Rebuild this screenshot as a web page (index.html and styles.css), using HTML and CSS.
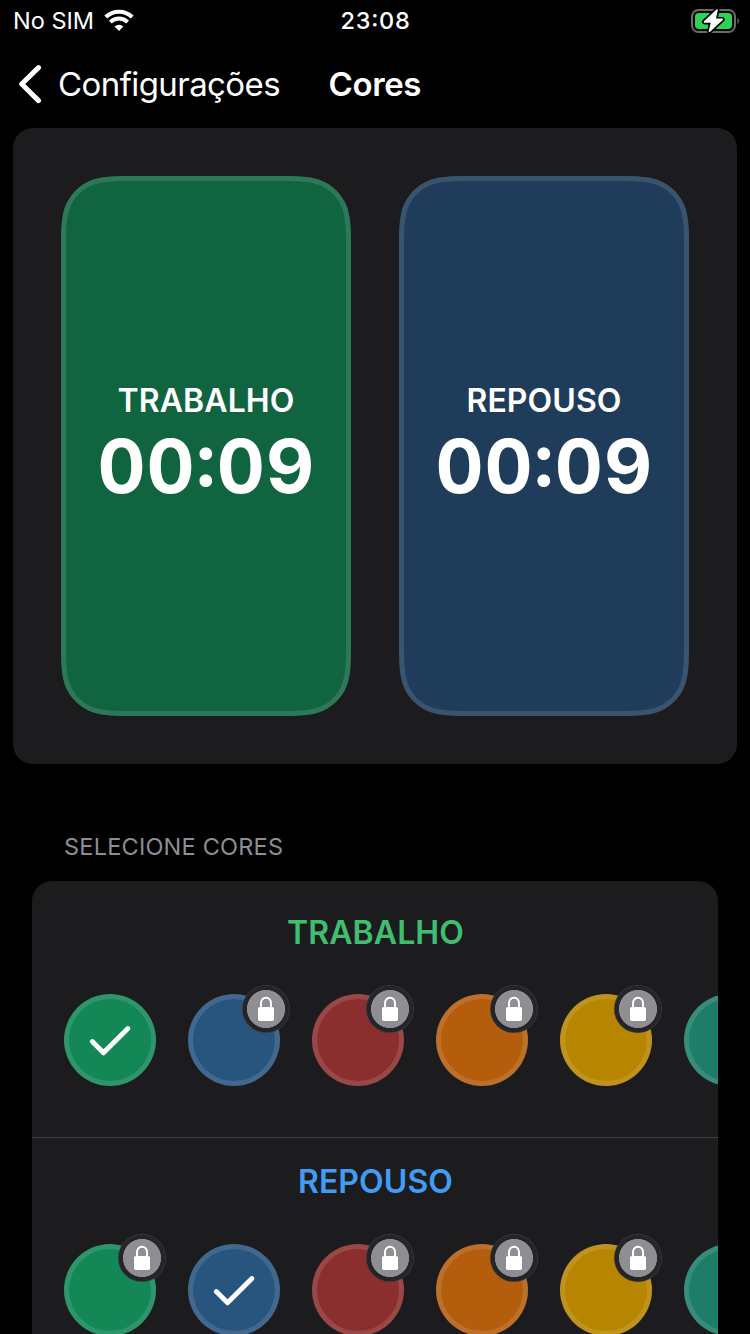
FILE: index.html
```html
<!DOCTYPE html>
<html lang="pt">
<head>
<meta charset="utf-8">
<title>Cores</title>
<link rel="stylesheet" href="styles.css">
</head>
<body>
<svg class="defs" width="0" height="0" aria-hidden="true">
  <defs>
    <path id="squircle" d="M76.4 0H213.6C235.58 0 246.58 0 258.43 3.75C271.36 8.45 281.55 18.64 286.25 31.57C290 43.42 290 54.42 290 76.4V463.6C290 485.58 290 496.58 286.25 508.43C281.55 521.36 271.36 531.55 258.43 536.25C246.58 540 235.58 540 213.6 540H76.4C54.42 540 43.42 540 31.57 536.25C18.64 531.55 8.45 521.36 3.75 508.43C0 496.58 0 485.58 0 463.6V76.4C0 54.42 0 43.42 3.75 31.57C8.45 18.64 18.64 8.45 31.57 3.75C43.42 0 54.42 0 76.4 0Z"/>
    <clipPath id="squircle-clip"><use href="#squircle"/></clipPath>
    <symbol id="lock" viewBox="0 0 48 48">
      <path d="M19 23V18.5C19 15.2 21 12.8 24 12.8S29 15.2 29 18.5V23" fill="none" stroke="#fff" stroke-width="2"/>
      <rect x="16" y="22" width="16" height="14" rx="1.8" fill="#fff"/>
    </symbol>
    <symbol id="check" viewBox="0 0 92 92">
      <path d="M28.3 47.6L39.5 58.8L63.9 34.6" fill="none" stroke="#fff" stroke-width="4.9" stroke-linecap="round" stroke-linejoin="round"/>
    </symbol>
  </defs>
</svg>
<div class="screen">
  <header class="status">
    <div class="carrier"><span class="carrier-name">No SIM</span>
      <svg class="wifi" width="30" height="23" viewBox="0 0 30 23">
        <g fill="none" stroke="#fff"><path d="M1.8 8.1A19 19 0 0 1 28.2 8.1" stroke-width="4.2"/><path d="M6.4 13.1A12.3 12.3 0 0 1 23.6 13.1" stroke-width="4"/></g>
        <path d="M15 22L10.6 17.6A6.3 6.3 0 0 1 19.4 17.6Z" fill="#fff"/>
      </svg>
    </div>
    <span class="clock">23:08</span>
    <svg class="battery" width="48" height="26" viewBox="0 0 48 26">
      <rect x="1" y="2" width="43" height="22" rx="6.5" fill="none" stroke="#6b6b6b" stroke-width="2"/>
      <path d="M46.5 9.5Q49.5 13 46.5 16.5Z" fill="#6b6b6b"/>
      <rect x="4" y="5" width="37" height="16" rx="4" fill="#30d158"/>
      <path d="M26 2L13.5 13.9H20.8L18.5 23.2L31.2 11.4H24Z" fill="#fff" stroke="#000" stroke-width="5" stroke-linejoin="round"/>
      <path d="M26 2L13.5 13.9H20.8L18.5 23.2L31.2 11.4H24Z" fill="#fff" stroke="#fff" stroke-width="1.6" stroke-linejoin="round"/>
    </svg>
  </header>
  <nav class="nav">
    <svg class="back" width="24" height="40" viewBox="0 0 24 40"><path d="M20.5 3.6L3.7 20L20.5 36.6" fill="none" stroke="#fff" stroke-width="5" stroke-linecap="round" stroke-linejoin="round"/></svg>
    <span class="back-label">Configurações</span>
    <h1 class="title">Cores</h1>
  </nav>
  <section class="preview">
    <div class="phone work">
      <svg class="phone-shape" width="290" height="540"><use href="#squircle" class="phone-fill" clip-path="url(#squircle-clip)"/></svg>
      <span class="phone-label">TRABALHO</span><span class="phone-time">00:09</span>
    </div>
    <div class="phone rest">
      <svg class="phone-shape" width="290" height="540"><use href="#squircle" class="phone-fill" clip-path="url(#squircle-clip)"/></svg>
      <span class="phone-label">REPOUSO</span><span class="phone-time">00:09</span>
    </div>
  </section>
  <h2 class="section"><span>SELECIONE CORES</span></h2>
  <section class="picker">
    <div class="group group-work">
      <h3 class="group-title">TRABALHO</h3>
      <div class="swatches">
        <div class="swatch green"><svg class="check"><use href="#check"/></svg></div>
        <div class="swatch blue"><svg class="badge"><use href="#lock"/></svg></div>
        <div class="swatch red"><svg class="badge"><use href="#lock"/></svg></div>
        <div class="swatch orange"><svg class="badge"><use href="#lock"/></svg></div>
        <div class="swatch yellow"><svg class="badge"><use href="#lock"/></svg></div>
        <div class="swatch teal"></div>
      </div>
    </div>
    <div class="group group-rest">
      <h3 class="group-title">REPOUSO</h3>
      <div class="swatches">
        <div class="swatch green"><svg class="badge"><use href="#lock"/></svg></div>
        <div class="swatch blue"><svg class="check"><use href="#check"/></svg></div>
        <div class="swatch red"><svg class="badge"><use href="#lock"/></svg></div>
        <div class="swatch orange"><svg class="badge"><use href="#lock"/></svg></div>
        <div class="swatch yellow"><svg class="badge"><use href="#lock"/></svg></div>
        <div class="swatch teal"></div>
      </div>
    </div>
  </section>
</div>
</body>
</html>
```
FILE: styles.css
```css
* { box-sizing: border-box; }
body { margin: 0; background: #000; color: #fff; font-family: Inter, "Liberation Sans", sans-serif; }
h1, h2, h3 { margin: 0; }
svg { display: block; flex: none; }
.defs { position: absolute; }
.screen { width: 750px; height: 1334px; overflow: hidden; display: flex; flex-direction: column; background: #000; white-space: nowrap; }

.status { height: 40px; flex: none; display: grid; grid-template-columns: 1fr auto 1fr; align-items: center; padding: 0 11px 0 13px; }
.carrier { display: flex; align-items: center; gap: 10px; }
.carrier-name { font-size: 23.5px; line-height: 40px; padding-top: 1px; }
.clock { font-size: 23.5px; font-weight: 550; letter-spacing: 0.75px; line-height: 40px; padding-top: 1px; margin-right: 1px; font-feature-settings: "case" 1; }
.battery { justify-self: end; }

.nav { height: 88px; flex: none; display: flex; align-items: center; padding-left: 18px; }
.back-label { font-size: 33px; margin-left: 16px; letter-spacing: -0.58px; }
.title { font-size: 33px; font-weight: 600; margin-left: 48.5px; letter-spacing: -0.4px; }

.preview { height: 636px; flex: none; margin: 0 13px; padding: 48px; display: flex; justify-content: space-between; background: #1c1c1e; border-radius: 20px; }
.phone { position: relative; width: 290px; height: 540px; display: flex; flex-direction: column; align-items: center; padding-top: 204px; }
.phone-shape { position: absolute; inset: 0; }
.phone-fill { stroke-width: 10px; }
.work .phone-fill { fill: #106440; stroke: #2d7858; }
.rest .phone-fill { fill: #1f3d5a; stroke: #3a546e; }
.phone-label { position: relative; font-size: 32px; line-height: 40px; font-weight: 600; letter-spacing: 0.1px; padding-top: 1px; }
.phone-time { position: relative; font-size: 74.5px; line-height: 90px; font-weight: 700; letter-spacing: 1px; margin-right: -0.5px; font-variant-numeric: tabular-nums; font-feature-settings: "case" 1; }

.section { height: 117px; flex: none; padding: 68px 0 0 64px; font-size: 23.5px; line-height: 30px; font-weight: 400; letter-spacing: 0.22px; color: #8d8d93; }

.picker { margin: 0 32px; width: 686px; height: 453px; flex: none; overflow: hidden; background: #1c1c1e; border-radius: 20px 20px 0 0; }
.group { display: flex; flex-direction: column; }
.group-work { height: 257px; padding-top: 32px; border-bottom: 1px solid #3d3d41; }
.group-rest { padding-top: 24px; }
.group-title { font-size: 32px; line-height: 40px; font-weight: 600; letter-spacing: 0.1px; text-align: center; padding-left: 1px; }
.group-work .group-title { color: #41bd72; }
.group-rest .group-title { color: #409cf4; }
.swatches { display: flex; gap: 32px; padding: 41px 0 0 32px; }
.group-rest .swatches { padding-top: 42px; }
.swatch { position: relative; width: 92px; height: 92px; flex: none; border-radius: 50%; border: 5px solid rgba(255,255,255,.12); }
.check { position: absolute; left: -5px; top: -5px; width: 92px; height: 92px; }
.badge { position: absolute; left: 49px; top: -14px; width: 48px; height: 48px; border-radius: 50%; background: radial-gradient(circle, #8e8e93 18.7px, #252529 19.4px, #252529 23px, #38383b 23.5px); }
.group-rest .badge { top: -15px; }
.green { background-color: #138756; }
.blue { background-color: #28557e; }
.red { background-color: #8b2e2e; }
.orange { background-color: #b35d0d; }
.yellow { background-color: #b88500; }
.teal { background-color: #1d7d68; }
```
